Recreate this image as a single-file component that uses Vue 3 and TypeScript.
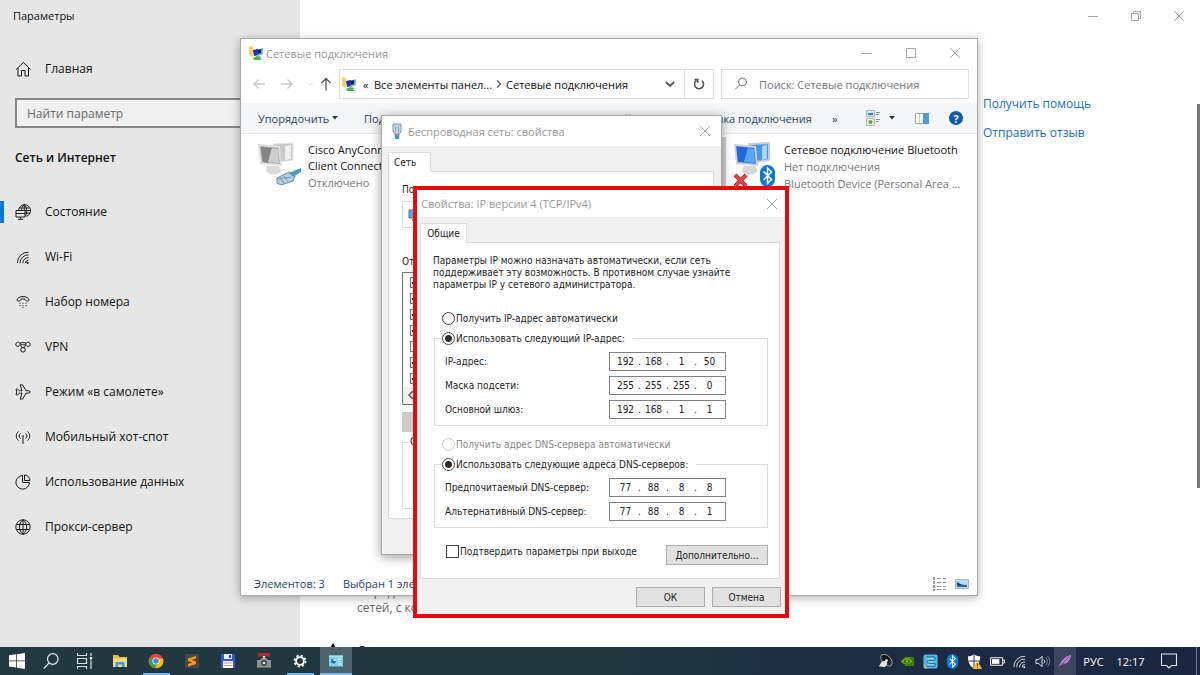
<script setup lang="ts">
import { ref } from 'vue'

interface NavItem {
  label: string
  paths: string[]
  active?: boolean
}

interface AddressRow {
  label: string
  octets: string[]
}

const navItems: NavItem[] = [
  {
    label: 'Состояние',
    active: true,
    paths: [
      'M3.6 6.5A6 6 0 1 1 11.5 12.4M9.300 .7C6.900 2.700 6.600 4.500 6.600 6.500M9.300 .7c2.800 2.500 3.200 7.500 1.200 11.500M4.200 4h10.300M10 9h5M9.300 .7v5.800M3.300 6.500h12',
      'M1 6.5h9v6.500H1zM3 15.300h5M5.500 13v2.300M1 9.500h9',
    ],
  },
  {
    label: 'Wi-Fi',
    paths: [
      'M2.5 14A10.5 10.5 0 0 1 13.5 3.2M5 14.2a8.2 8.2 0 0 1 8.5-8.3M7.8 14.2a5.6 5.6 0 0 1 5.7-5.6M10.3 14.2a3.2 3.2 0 0 1 3.2-3',
      'M12 13.2h1.2v1.2H12z',
    ],
  },
  {
    label: 'Набор номера',
    paths: [
      'M2 6.3C2 1.3 14 1.3 14 6.3c0 1-3.2 1-3.2 0 0-1.9-5.6-1.9-5.6 0C5.2 7.3 2 7.3 2 6.3z',
      'M4.5 9.3h1M7.5 9.3h1M10.5 9.3h1M4.5 11.5h1M7.5 11.5h1M10.5 11.5h1M7.5 13.5h1',
    ],
  },
  {
    label: 'VPN',
    paths: [
      'M5 5.500a2.100 2.100 0 1 1-.5-1.500c2 2.500 5.500 2.500 7 0a2.100 2.100 0 1 1-.5 1.500L8.800 9M5 5.500L7.200 9M4.800 4C6.500 3.500 9.500 3.500 11.200 4M8 8.500a2.300 2.300 0 1 1 0 4.600 2.300 2.300 0 0 1 0-4.600z',
    ],
  },
  {
    label: 'Режим «в самолете»',
    paths: [
      'M1 5.2h1.800L4.5 6.800H7L5.200 .8h2.300l3.700 6h2.600c1.800 0 1.800 2.300 0 2.300h-2.600l-3.700 6H5.200L7 9.100H4.500L2.800 10.800H1l.8-2.800z',
    ],
  },
  {
    label: 'Мобильный хот-спот',
    paths: [
      'M8 7v8M5.5 9.5a3 3 0 0 1 0-5M10.5 9.5a3 3 0 0 0 0-5M3.5 11.5C.5 9 .5 5 3.5 2.500M12.5 11.5c3-2.500 3-6.500 0-9M7.300 6.800h1.400',
    ],
  },
  {
    label: 'Использование данных',
    paths: ['M7.5 1.5A6.800 6.800 0 1 0 14.5 8.5H7.5zM9.5 1a6 6 0 0 1 5.500 5.500H9.500z'],
  },
  {
    label: 'Прокси-сервер',
    paths: [
      'M8 .8a7.200 7.200 0 1 0 0 14.400A7.200 7.200 0 1 0 8 .8zM8 .8v14.400M8 .8c-4.800 4-4.800 10.400 0 14.400M8 .8c4.800 4 4.800 10.400 0 14.400M1.5 5.500h13M1.5 10.500h13',
    ],
  },
]

const ipRows: AddressRow[] = [
  { label: 'IP-адрес:', octets: ['192', '168', '1', '50'] },
  { label: 'Маска подсети:', octets: ['255', '255', '255', '0'] },
  { label: 'Основной шлюз:', octets: ['192', '168', '1', '1'] },
]

const dnsRows: AddressRow[] = [
  { label: 'Предпочитаемый DNS-сервер:', octets: ['77', '88', '8', '8'] },
  { label: 'Альтернативный DNS-сервер:', octets: ['77', '88', '8', '1'] },
]

const components = [true, true, true, true, false, true, true]

const ipMode = ref('manual')
const dnsMode = ref('manual')
const validate = ref(false)
</script>

<template>
  <div class="desktop">
    <div class="settings">
      <aside class="sidebar">
        <div class="app-title">Параметры</div>
        <a class="home" href="#">
          <svg class="nav-icon" viewBox="0 0 16 16"><path d="M1 8.500L8.500 1.500l7 7M3 7v8h3.500V9.500h3.500V15h3.500V7" /></svg>
          Главная
        </a>
        <input class="find" type="text" placeholder="Найти параметр" aria-label="Найти параметр" />
        <h2>Сеть и Интернет</h2>
        <nav>
          <a v-for="item in navItems" :key="item.label" href="#" class="nav-link" :class="{ active: item.active }">
            <svg class="nav-icon" viewBox="0 0 16 16"><path v-for="d in item.paths" :key="d" :d="d" /></svg>
            {{ item.label }}
          </a>
        </nav>
      </aside>

      <main class="main">
        <div class="main-controls">
          <button aria-label="Свернуть"><svg viewBox="0 0 10 10"><path d="M0 5.500h10" /></svg></button>
          <button aria-label="Восстановить"><svg viewBox="0 0 10 10"><path d="M.5 2.500h7v7h-7zM2.500 2.500v-2h7v7h-2" /></svg></button>
          <button aria-label="Закрыть"><svg viewBox="0 0 10 10"><path d="M0 0l10 10M10 0L0 10" /></svg></button>
        </div>
        <div class="main-body">
          <section class="details">
            <p>Определите, какие данные<br />сетей, с которыми</p>
            <h3>
              <svg viewBox="0 0 14 14"><path d="M7 0l7 13H0z" /></svg>
              Средство
            </h3>
          </section>
          <div class="help-links">
            <a href="#">Получить помощь</a>
            <a href="#">Отправить отзыв</a>
          </div>
          <div class="scroll-thumb"></div>
        </div>
      </main>
    </div>

    <section class="window explorer">
      <header class="titlebar">
        <svg class="net-icon" viewBox="0 0 16 16">
          <path d="M1 1l4 1v10l-4-2z" fill="#f3d464" />
          <path d="M5 5l5-1 1 6-5 1z" fill="#1535a8" />
          <path d="M9 5l6-2v6l-5 2z" fill="#7ea9e0" />
          <path d="M9 5l4-1v4l-3 1z" fill="#071a72" />
          <path d="M5 13l4-2 5 1-2 1 2 2H6z" fill="#48b649" />
        </svg>
        <span class="window-name">Сетевые подключения</span>
        <button aria-label="Свернуть"><svg viewBox="0 0 10 10"><path d="M0 5.500h10" /></svg></button>
        <button aria-label="Развернуть"><svg viewBox="0 0 10 10"><path d="M.5 .5h9v9h-9z" /></svg></button>
        <button aria-label="Закрыть"><svg viewBox="0 0 10 10"><path d="M0 0l10 10M10 0L0 10" /></svg></button>
      </header>

      <div class="address-row">
        <div class="history">
          <button aria-label="Назад"><svg viewBox="0 0 14 14"><path d="M13 7H2M6.500 2.500L2 7l4.500 4.500" /></svg></button>
          <button aria-label="Вперед"><svg viewBox="0 0 14 14"><path d="M1 7h11M7.500 2.500L12 7l-4.500 4.500" /></svg></button>
          <button class="tiny" aria-label="Последние"><svg viewBox="0 0 14 14"><path d="M2 4.500L7 9.500l5-5" /></svg></button>
          <button class="up" aria-label="Вверх"><svg viewBox="0 0 14 14"><path d="M7 13.500V1.500M2.500 6L7 1.500 11.500 6" /></svg></button>
        </div>
        <div class="address">
          <svg class="net-icon" viewBox="0 0 16 16">
            <path d="M1 1l4 1v10l-4-2z" fill="#f3d464" />
            <path d="M5 5l5-1 1 6-5 1z" fill="#1535a8" />
            <path d="M9 5l6-2v6l-5 2z" fill="#7ea9e0" />
            <path d="M9 5l4-1v4l-3 1z" fill="#071a72" />
            <path d="M5 13l4-2 5 1-2 1 2 2H6z" fill="#48b649" />
          </svg>
          <span class="laquo">«</span>
          <span class="crumb first">Все элементы панел...</span>
          <svg class="crumb-sep" viewBox="0 0 6 10"><path d="M1 1.500L4.500 5 1 8.500" /></svg>
          <span class="crumb">Сетевые подключения</span>
          <svg class="drop" viewBox="0 0 10 10"><path d="M1 3l4 4 4-4" /></svg>
          <button class="refresh" aria-label="Обновить">
            <svg viewBox="0 0 12 12"><path d="M3.500 2.500A4.500 4.500 0 1 0 9 2.800M1.500 1.500h3.300v3.300" /></svg>
          </button>
        </div>
        <label class="search-box">
          <svg viewBox="0 0 14 14"><circle cx="8.500" cy="5" r="4" /><path d="M5.500 8L1 12.500" /></svg>
          <input type="text" placeholder="Поиск: Сетевые подключения" aria-label="Поиск" />
        </label>
      </div>

      <div class="toolbar">
        <button class="organize">Упорядочить <svg class="caret" viewBox="0 0 6 4"><path d="M0 0h6L3 3.500z" /></svg></button>
        <button class="connect">Подключение к</button>
        <button class="disable">Отключение сетевого устройства</button>
        <button class="diagnose">Диагностика подключения</button>
        <button class="more">»</button>
        <button class="views" aria-label="Вид">
          <svg viewBox="0 0 26 16">
            <path d="M.5 .5h8v6h-8z" fill="#dceaf5" stroke="#a8b4bd" /><path d="M2 3h5v2H2z" fill="#397db5" />
            <path d="M.5 8.500h8v7h-8z" fill="#e9efda" stroke="#a8b4bd" /><circle cx="4.500" cy="12" r="2" fill="#72a34b" />
            <path d="M10 2.500h4M10 4.500h3M10 9.500h4M10 11.500h3" stroke="#8b9096" fill="none" />
          </svg>
          <svg class="caret" viewBox="0 0 6 4"><path d="M0 0h6L3 3.500z" /></svg>
        </button>
        <button class="pane" aria-label="Область просмотра">
          <svg viewBox="0 0 14 11"><path d="M.5 .5h13v10H.5z" fill="#fff" stroke="#9aa5ae" /><path d="M4.500 1v9" stroke="#c3c9ce" /><path d="M8 0h6v11H8z" fill="#4b9cd8" /></svg>
        </button>
        <button class="help" aria-label="Справка">?</button>
      </div>

      <div class="connections">
        <article class="connection">
          <svg class="device" viewBox="0 0 44 46">
            <path d="M15 2l20-1v17l-18 3z" fill="#c9c9c9" stroke="#e8e8e8" />
            <path d="M27 4l6-1v14l-6 1z" fill="#efefef" />
            <path d="M9 24l12 0 3 5c-4 5-14 4-16 0z" fill="#dadada" />
            <path d="M1 3l20 2 2 18-20-2z" fill="#a3a3a3" stroke="#dedede" stroke-width="2" />
            <path d="M3 5l11 1-4 15-5-1z" fill="#858585" />
            <path d="M14 6l6 1 1 14-11-1z" fill="#cdcdcd" />
            <path d="M19 36l12-6 6 4-2 5-12 4-4-2z" fill="#b9cddd" stroke="#6c8ba2" />
            <path d="M22 36l4 5M26 34l4 5M19 37l14-2" stroke="#7695ac" fill="none" />
            <path d="M31 31l12-5v4l-8 5z" fill="#4b9aca" />
          </svg>
          <div>
            <div class="conn-name">Cisco AnyConnect Secure Mobility<br />Client Connection</div>
            <div class="conn-state">Отключено</div>
          </div>
        </article>
        <article class="connection selected"></article>
        <article class="connection">
          <svg class="device" viewBox="0 0 44 46">
            <path d="M15 2l20-1v17l-18 3z" fill="#4896e9" stroke="#c9cfd5" stroke-width="2" />
            <path d="M28 4l5-1v14l-5 1z" fill="#a7d4ff" />
            <path d="M9 24l12 0 3 5c-4 5-14 4-16 0z" fill="#d5d8db" />
            <path d="M1 3l20 2 2 18-20-2z" fill="#2468d8" stroke="#cbd1d6" stroke-width="2" />
            <path d="M14 6l6 1 1 14-11-1z" fill="#58a7f3" />
            <rect x="26" y="23" width="15" height="22" rx="7.500" fill="#0a78d7" />
            <path d="M29.500 29.500l8 8-4 4V26l4 4-8 8" fill="none" stroke="#fff" stroke-width="1.500" />
            <path d="M1 33l11 11M12 33L1 44" stroke="#b52222" stroke-width="4" /><path d="M1 33l11 11M12 33L1 44" stroke="#ef4848" stroke-width="2" />
          </svg>
          <div>
            <div class="conn-name">Сетевое подключение Bluetooth</div>
            <div class="conn-state">Нет подключения</div>
            <div class="conn-state">Bluetooth Device (Personal Area ...</div>
          </div>
        </article>
      </div>

      <footer class="statusbar">
        <span class="count">Элементов: 3</span>
        <span class="chosen">Выбран 1 элемент</span>
        <button aria-label="Таблица">
          <svg viewBox="0 0 14 14"><path d="M1 0v14" stroke="#999" stroke-width="2" stroke-dasharray="3 1" /><path d="M4 1.500h4M10 1.500h3M4 5.500h4M10 5.500h3M4 9.500h4M10 9.500h3M4 12.500h4M10 12.500h3" stroke="#999" /></svg>
        </button>
        <button aria-label="Значки">
          <svg viewBox="0 0 14 12"><path d="M.5 1.500h13v9H.5z" fill="#b9dcf3" stroke="#9bb6cc" /><path d="M2 6l10 1v2H2z" fill="#256b91" /><path d="M2 4l5 3H2z" fill="#16414d" /></svg>
        </button>
      </footer>
    </section>

    <section class="window adapter" role="dialog" aria-label="Беспроводная сеть: свойства">
      <header class="titlebar">
        <svg class="plug-icon" viewBox="0 0 10 16"><path d="M1 1h8v8l-2 2H3L1 9z" fill="#c3d5e4" stroke="#8199ad" /><path d="M3.500 3v6M6.500 3v6" stroke="#8fa6bb" /><path d="M2.500 11h5v2h-5z" fill="#7797b0" /><path d="M3 13h4v3H3z" fill="#2b9ad0" /></svg>
        <span class="window-name">Беспроводная сеть: свойства</span>
        <button aria-label="Закрыть"><svg viewBox="0 0 10 10"><path d="M0 0l10 10M10 0L0 10" /></svg></button>
      </header>
      <div class="tabs"><button class="tab">Сеть</button></div>
      <div class="page">
        <div>Подключение через:</div>
        <div class="adapter-name">
          <svg viewBox="0 0 14 12"><path d="M1 1h12v8H1z" fill="#59a9df" stroke="#4a7594" /><path d="M4 10h6v2H4z" fill="#8ba0ae" /></svg>
        </div>
        <div>Отмеченные компоненты</div>
        <div class="component-list">
          <input v-for="(on, i) in components" :key="i" type="checkbox" class="check small" :checked="on" :aria-label="'Компонент ' + (i + 1)" />
          <div class="list-scroll"><svg viewBox="0 0 6 8"><path d="M5 0L1 4l4 4" /></svg></div>
        </div>
        <div class="install"></div>
        <fieldset class="about"><legend>Описание</legend></fieldset>
      </div>
    </section>

    <section class="window ipv4" role="dialog" aria-label="Свойства: IP версии 4 (TCP/IPv4)">
      <header class="titlebar">
        <span class="window-name">Свойства: IP версии 4 (TCP/IPv4)</span>
        <button aria-label="Закрыть"><svg viewBox="0 0 10 10"><path d="M0 0l10 10M10 0L0 10" /></svg></button>
      </header>
      <div class="tabs"><button class="tab">Общие</button></div>
      <div class="page">
        <p class="intro">
          Параметры IP можно назначать автоматически, если сеть<br />
          поддерживает эту возможность. В противном случае узнайте<br />
          параметры IP у сетевого администратора.
        </p>
        <label class="option ip-auto"><input v-model="ipMode" class="radio" type="radio" name="ip" value="auto" />Получить IP-адрес автоматически</label>
        <fieldset class="group">
          <legend><label class="option"><input v-model="ipMode" class="radio" type="radio" name="ip" value="manual" />Использовать следующий IP-адрес:</label></legend>
          <div v-for="row in ipRows" :key="row.label" class="address-line">
            <span>{{ row.label }}</span>
            <div class="ip-field" role="group" :aria-label="row.label">
              <template v-for="(_, i) in row.octets" :key="i">
                <span v-if="i > 0" class="dot">.</span>
                <input v-model="row.octets[i]" type="text" :aria-label="row.label + ' ' + (i + 1)" />
              </template>
            </div>
          </div>
        </fieldset>
        <label class="option dns-auto"><input v-model="dnsMode" class="radio" type="radio" name="dns" value="auto" disabled />Получить адрес DNS-сервера автоматически</label>
        <fieldset class="group">
          <legend><label class="option"><input v-model="dnsMode" class="radio" type="radio" name="dns" value="manual" />Использовать следующие адреса DNS-серверов:</label></legend>
          <div v-for="row in dnsRows" :key="row.label" class="address-line">
            <span>{{ row.label }}</span>
            <div class="ip-field" role="group" :aria-label="row.label">
              <template v-for="(_, i) in row.octets" :key="i">
                <span v-if="i > 0" class="dot">.</span>
                <input v-model="row.octets[i]" type="text" :aria-label="row.label + ' ' + (i + 1)" />
              </template>
            </div>
          </div>
        </fieldset>
        <div class="confirm-row">
          <label class="option"><input v-model="validate" class="check" type="checkbox" />Подтвердить параметры при выходе</label>
          <button class="push wide">Дополнительно...</button>
        </div>
      </div>
      <footer class="actions">
        <button class="push">ОК</button>
        <button class="push">Отмена</button>
      </footer>
    </section>

    <footer class="taskbar">
      <div class="system-buttons">
        <button aria-label="Пуск"><svg viewBox="0 0 16 16"><path d="M0 2.300L7 1.300v6.200H0zM7.800 1.200L16 0v7.500H7.800zM0 8.300h7v6.300l-7-1zM7.800 8.300H16V16l-8.200-1.200z" fill="#fff" /></svg></button>
        <button aria-label="Поиск"><svg viewBox="0 0 16 16"><circle cx="9.800" cy="6" r="5.300" fill="none" stroke="#e4e9eb" stroke-width="1.200" /><path d="M6 10L.8 15.500" stroke="#e4e9eb" stroke-width="1.200" /></svg></button>
        <button aria-label="Представление задач"><svg viewBox="0 0 16 16"><path d="M.5 0v2.500h9V0M.5 5.500h9v5h-9zM.5 16v-2.500h9V16M14 0v3M14 7.500V16" fill="none" stroke="#d9dfe2" stroke-width="1.200" /><path d="M12.800 4h2.400v2.500h-2.400z" fill="#fff" /></svg></button>
      </div>
      <div class="pinned">
        <button aria-label="Проводник"><svg viewBox="0 0 16 16"><path d="M1 2h5l1.500 2H15v10H1z" fill="#e8b84a" /><path d="M1 5.500h14V14H1z" fill="#ffdc7b" /><path d="M3.500 14V9h9v5h-2.500v-2.500H6V14z" fill="#3a9be0" /></svg></button>
        <button class="running" aria-label="Chrome"><svg viewBox="0 0 16 16"><circle cx="8" cy="8" r="7.300" fill="#ea4335" /><path d="M1.700 4.300A7.300 7.300 0 0 0 7 15.200L10.500 10 5 9z" fill="#34a853" /><path d="M15 5.500A7.300 7.300 0 0 1 7 15.200l4-6.200V5.500z" fill="#fbbc05" /><circle cx="8" cy="8" r="3.600" fill="#f5f5f5" /><circle cx="8" cy="8" r="2.700" fill="#4285f4" /></svg></button>
        <button aria-label="Sublime Text"><svg viewBox="0 0 16 16"><rect x="1" y="1" width="14" height="14" rx="1" fill="#47474a" /><path d="M4 5.500L12 3v2.500L7.500 7 12 8.500v2.500l-8 2.500V11l4.500-1.500L4 8z" fill="#ff9800" /></svg></button>
        <button aria-label="Total Commander"><svg viewBox="0 0 16 16"><path d="M1 1h13l1 1v13H1z" fill="#3458d1" /><path d="M4 1h8v5H4z" fill="#edf0fa" /><path d="M9 2h2v3H9z" fill="#2645ac" /><path d="M3 8h10v7H3z" fill="#fff" /><path d="M4 10h8M4 12.500h8" stroke="#b695c5" /></svg></button>
        <button aria-label="Клапан"><svg viewBox="0 0 16 16"><path d="M2 0h12v3.500H2z" fill="#b92531" /><path d="M7 3h2v3H7z" fill="#e5e5e5" /><path d="M1 7h3l2-2h4l2 2h3v8H1z" fill="#8f9495" /><circle cx="8" cy="10" r="3" fill="#3c4245" /><circle cx="8" cy="10" r="1.300" fill="#e7e9e9" /><path d="M1 14h14v1H1z" fill="#6d7476" /></svg></button>
        <button class="running" aria-label="Параметры"><svg viewBox="0 0 16 16"><circle cx="8" cy="8" r="3.900" fill="none" stroke="#fff" stroke-width="1.900" /><circle cx="8" cy="8" r="5.500" fill="none" stroke="#fff" stroke-width="1.800" stroke-dasharray="2.160 2.160" /></svg></button>
        <button class="running focused" aria-label="Панель управления"><svg viewBox="0 0 16 16"><path d="M1 2.500h14v11H1z" fill="#7fd0f5" /><path d="M1 2.500h14v1.500H1z" fill="#a9e2fb" /><circle cx="5.500" cy="8" r="2.500" fill="#1878b5" /><path d="M5.500 8V5.500A2.500 2.500 0 0 1 8 8z" fill="#fff" /><path d="M10 6h3M10 8.500h3M10 11h3" stroke="#fff" /></svg></button>
      </div>
      <div class="tray">
        <button aria-label="Аудио"><svg viewBox="0 0 16 16"><ellipse cx="9" cy="6.500" rx="7.500" ry="4.500" fill="#15191e" stroke="#c8c8c8" stroke-width=".8" transform="rotate(48 9 6.500)" /><path d="M1 13l3-5 5-1 1 4-3 3z" fill="#e5e5e5" /><circle cx="9" cy="7" r="1.500" fill="#fff" /></svg></button>
        <button aria-label="NVIDIA"><svg viewBox="0 0 16 16"><path d="M5 3h10v10H5z" fill="#3f7810" /><path d="M1 8c3-5 9-5 12 0-3 4-9 4-12 0z" fill="#76b900" /><path d="M3.500 8c2-3 5-3 7.500 0-2 3-5.500 3-7.500 0z" fill="#285a0b" /><circle cx="7.500" cy="8" r="1.300" fill="#83c521" /></svg></button>
        <button aria-label="Графика"><svg viewBox="0 0 16 16"><rect x=".5" y=".5" width="15" height="15" rx="2" fill="#57b5df" /><path d="M4 3h8c2 1 1 4-1 4H6c-2 0-2 3 0 3h7v3H4" fill="none" stroke="#176a9b" /><path d="M5 5h6M5 8.500h7M5 11.500h7" stroke="#b6e1ee" fill="none" /><path d="M.5 11l4 4.500H2z" fill="#e6c256" /></svg></button>
        <button aria-label="Bluetooth"><svg viewBox="0 0 16 16"><rect x="2" y="0" width="12" height="16" rx="6" fill="#0a78e0" /><path d="M5 5l6 6-3 3V2l3 3-6 6" fill="none" stroke="#fff" stroke-width="1.100" /></svg></button>
        <button aria-label="Безопасность"><svg viewBox="0 0 16 16"><path d="M1 2.500C4 2.500 6 1.500 7.500 0 9 1.500 11 2.500 14 2.500 14 9 12 13 7.500 15.500 3 13 1 9 1 2.500z" fill="#fff" /><path d="M7.500 0v15M1.500 7.500h12" stroke="#1d2a3c" /><path d="M11 7l5 9H6.500z" fill="#ffbf2d" /><path d="M11.200 10v3M11.200 14v1" stroke="#302d21" /></svg></button>
        <button aria-label="Батарея"><svg viewBox="0 0 16 16"><path d="M.5 4h13v8H.5zM13.500 6.500h2v3h-2" fill="none" stroke="#fff" /><path d="M2 5.500h8v5H2z" fill="#fff" /></svg></button>
        <button aria-label="Wi-Fi"><svg viewBox="0 0 16 16"><path d="M2 14A11 11 0 0 1 14 2.500M5 14.200A8 8 0 0 1 14 5.500M8 14.200A5.500 5.500 0 0 1 14 8.500M10.800 14.200a3 3 0 0 1 3.200-3" fill="none" stroke="#d9dde3" /><circle cx="13" cy="14" r="1" fill="#fff" /></svg></button>
        <button aria-label="Громкость"><svg viewBox="0 0 16 16"><path d="M1 6h3l3.500-3.500v11L4 10H1zM9.500 6a3 3 0 0 1 0 4" fill="none" stroke="#eef0f3" /><path d="M11.500 4a5.500 5.500 0 0 1 0 8M13.500 2.500a8 8 0 0 1 0 11" fill="none" stroke="#7d8797" /></svg></button>
        <button class="focused" aria-label="Перо"><svg viewBox="0 0 16 16"><path d="M1 15l3-6c2-4 6-7 11-8-1 5-3 9-8 10l-3 1z" fill="#b986d4" /><path d="M1 15L13 3M5 11l7-1" stroke="#553668" stroke-width=".8" /></svg></button>
      </div>
      <button class="language">РУС</button>
      <time class="clock">12:17</time>
      <button class="notify" aria-label="Уведомления"><svg viewBox="0 0 16 16"><path d="M.5 1h15v11.500h-5L8 15l-2.500-2.500h-5z" fill="none" stroke="#e8ebef" stroke-width="1.100" /></svg></button>
      <button class="show-desktop" aria-label="Показать рабочий стол"></button>
    </footer>
  </div>
</template>

<style>
body {
  margin: 0;
}
</style>

<style scoped>
.desktop {
  position: relative;
  display: flex;
  flex-direction: column;
  height: 100vh;
  overflow: hidden;
  background: #fff;
  color: #111;
  font-family: "Open Sans", "Noto Sans", sans-serif;
  font-size: 11px;
}
* {
  box-sizing: border-box;
}
button {
  display: flex;
  align-items: center;
  justify-content: center;
  padding: 0;
  border: 0;
  background: none;
  color: inherit;
  font: inherit;
}
input {
  font: inherit;
  color: inherit;
}
a {
  text-decoration: none;
}
svg {
  flex: none;
}

/* Settings app */
.settings {
  display: flex;
  flex: 1;
  min-height: 0;
}
.sidebar {
  width: 300px;
  flex: none;
  background: #e6e6e6;
  font-size: 12px;
}
.app-title {
  padding-left: 13px;
  height: 46px;
  line-height: 31px;
  font-size: 11px;
}
.home,
.nav-link {
  display: flex;
  align-items: center;
  gap: 14px;
  height: 45px;
  padding-left: 15px;
  color: #111;
}
.nav-icon {
  width: 16px;
  height: 16px;
  fill: none;
  stroke: #1b1b1b;
  stroke-width: 1;
}
.find {
  display: block;
  width: 270px;
  height: 30px;
  margin: 7px 0 0 15px;
  padding: 0 10px;
  border: 2px solid #858585;
  background: #f0f0f0;
}
.find::placeholder {
  color: #686868;
  opacity: 1;
}
h2 {
  margin: 0;
  padding-left: 15px;
  height: 61px;
  line-height: 59px;
  font-size: 12px;
  font-weight: 600;
}
.active {
  background: linear-gradient(#0078d7, #0078d7) 0 50% / 4px 22px no-repeat;
}
.main {
  display: flex;
  flex: 1;
  flex-direction: column;
  min-width: 0;
}
.main-controls {
  display: flex;
  justify-content: flex-end;
  height: 31px;
}
.main-controls button {
  width: 43px;
}
.main-controls svg,
.titlebar button svg {
  width: 10px;
  height: 10px;
  fill: none;
  stroke: #999;
  stroke-width: 0.9;
}
.main-body {
  display: flex;
  flex: 1;
  min-height: 0;
}
.details {
  display: flex;
  flex: 1;
  flex-direction: column;
  padding: 553px 0 0 57px;
  color: #666;
  font-size: 12px;
}
.details p {
  margin: 0;
  line-height: 16px;
}
.details h3 {
  display: flex;
  align-items: center;
  gap: 17px;
  margin: 24px 0 0 -31px;
  color: #111;
  font-size: 13px;
  font-weight: 400;
  line-height: 20px;
}
.details h3 svg {
  width: 14px;
  height: 14px;
}
.help-links {
  display: flex;
  flex-direction: column;
  gap: 9px;
  width: 214px;
  padding-top: 63px;
  font-size: 12px;
  line-height: 20px;
}
.help-links a {
  color: #1a6fb5;
}
.scroll-thumb {
  width: 3px;
  height: 384px;
  margin-top: 73px;
  background: #777;
}

/* Shared window chrome */
.window {
  position: absolute;
  display: flex;
  flex-direction: column;
}
.titlebar {
  display: flex;
  align-items: center;
  height: 30px;
  flex: none;
  background: #fff;
  color: #999;
}
.window-name {
  flex: 1;
}

/* Network connections window */
.explorer {
  left: 240px;
  top: 38px;
  width: 738px;
  height: 558px;
  border: 1px solid #aaa;
  background: #fff;
  box-shadow: 0 2px 9px rgba(0, 0, 0, 0.3);
}
.explorer .titlebar {
  height: 28px;
  margin-bottom: 2px;
  padding-left: 7px;
}
.explorer .titlebar button {
  width: 44px;
  height: 28px;
}
.net-icon {
  width: 16px;
  height: 16px;
  margin-right: 2px;
}
.address-row {
  display: flex;
  height: 30px;
  padding-right: 8px;
}
.history {
  display: flex;
  align-items: center;
  width: 98px;
  padding-left: 11px;
}
.history svg {
  width: 14px;
  height: 14px;
  fill: none;
  stroke: #c9c9c9;
  stroke-width: 1.3;
}
.history button {
  width: 14px;
  margin-right: 14px;
}
.history .tiny {
  width: 8px;
  margin: 0 5px 0 -2px;
}
.history .tiny svg {
  width: 8px;
}
.history .up {
  margin: 0;
}
.history .up svg {
  stroke: #555;
}
.address {
  display: flex;
  flex: 1;
  align-items: center;
  padding-left: 1px;
  border: 1px solid #ddd;
}
.laquo {
  width: 15px;
  padding-left: 4px;
}
.crumb.first {
  margin-right: 4px;
}
.crumb-sep {
  width: 6px;
  height: 10px;
  margin-right: 4px;
  fill: none;
  stroke: #555;
  stroke-width: 1.3;
}
.drop {
  width: 10px;
  height: 10px;
  margin: 0 9px 0 auto;
  fill: none;
  stroke: #555;
  stroke-width: 1.8;
}
.refresh {
  width: 29px;
  height: 28px;
  border-left: 1px solid #ddd;
}
.refresh svg {
  width: 12px;
  height: 12px;
  fill: none;
  stroke: #555;
  stroke-width: 1.6;
}
.search-box {
  display: flex;
  align-items: center;
  width: 248px;
  margin-left: 7px;
  padding-left: 12px;
  border: 1px solid #ddd;
}
.search-box svg {
  width: 14px;
  height: 14px;
  fill: none;
  stroke: #777;
}
.search-box input {
  flex: 1;
  min-width: 0;
  padding: 0 0 0 11px;
  border: 0;
  background: none;
}
.search-box input::placeholder {
  color: #757575;
  opacity: 1;
}
.toolbar {
  display: flex;
  align-items: center;
  height: 31px;
  margin-top: 4px;
  padding-left: 17px;
  border-bottom: 1px solid #e7e9ec;
  background: #f5f6f8;
  color: #2c4362;
  white-space: nowrap;
}
.toolbar button {
  justify-content: flex-start;
}
.caret {
  width: 6px;
  height: 4px;
  margin-left: 3px;
  fill: #2b3440;
}
.organize {
  width: 106px;
}
.connect {
  width: 110px;
}
.disable {
  width: 193px;
}
.diagnose {
  flex: 1;
}
.more {
  width: 34px;
}
.views {
  width: 49px;
}
.views svg:first-child {
  width: 26px;
  height: 16px;
  margin-right: -6px;
}
.pane {
  width: 34px;
}
.pane svg {
  width: 14px;
  height: 11px;
}
.toolbar .help {
  justify-content: center;
  width: 14px;
  height: 14px;
  margin-right: 14px;
  border-radius: 50%;
  background: #0b5aad;
  color: #fff;
  font-weight: 700;
}
.connections {
  display: grid;
  grid-template-columns: repeat(3, 238px);
  flex: 1;
  align-content: start;
  padding: 3px 0 0 9px;
  overflow: hidden;
}
.connection {
  display: flex;
  align-items: flex-start;
  gap: 6px;
  height: 58px;
  padding: 5px 0 0 8px;
  white-space: nowrap;
  overflow: hidden;
}
.connection.selected {
  background: #d5d5d5;
}
.device {
  width: 44px;
  height: 46px;
}
.conn-name {
  line-height: 16px;
}
.conn-state {
  color: #777;
  line-height: 17px;
}
.statusbar {
  display: flex;
  align-items: center;
  height: 23px;
  padding: 0 8px 0 13px;
  color: #2c4362;
}
.count {
  width: 89px;
}
.chosen {
  flex: 1;
}
.statusbar button {
  width: 14px;
  margin-left: 8px;
}
.statusbar svg {
  width: 14px;
  height: 14px;
}

/* Dialogs */
.tabs {
  display: flex;
  flex: none;
}
.tab {
  position: relative;
  z-index: 1;
  height: 20px;
  margin-bottom: -1px;
  border: 1px solid #dcdcdc;
  border-bottom: 0;
  background: #fff;
}
.page {
  border: 1px solid #dcdcdc;
  background: #fff;
}
.adapter,
.ipv4 {
  background: #f0f0f0;
}
.adapter .tabs,
.adapter .page,
.ipv4 .tabs,
.ipv4 .page,
.actions {
  color: #222;
  font-family: "DejaVu Sans Condensed", "DejaVu Sans", sans-serif;
  font-size: 10px;
}
.adapter {
  left: 381px;
  top: 115px;
  width: 341px;
  height: 440px;
  border: 1px solid #aaa;
  box-shadow: 0 2px 10px rgba(0, 0, 0, 0.4);
}
.adapter .titlebar {
  padding: 0 11px 0 10px;
}
.plug-icon {
  width: 10px;
  height: 16px;
  margin-right: 6px;
}
.adapter .tabs {
  padding: 6px 0 0 6px;
}
.adapter .tab {
  width: 43px;
  justify-content: flex-start;
  padding-left: 5px;
}
.adapter .page {
  height: 348px;
  margin: 0 7px 0 6px;
  padding: 11px 12px 0 13px;
  line-height: 14px;
}
.adapter-name {
  display: flex;
  align-items: center;
  height: 27px;
  margin: 4px 0 27px;
  padding-left: 5px;
  border: 1px solid #ddd;
}
.adapter-name svg {
  width: 14px;
  height: 12px;
}
.component-list {
  display: flex;
  flex-direction: column;
  gap: 5px;
  height: 133px;
  margin-top: 3px;
  padding: 4px 0 0 7px;
  border: 1px solid #777;
}
.list-scroll {
  height: 17px;
  margin: -2px 0 0 -7px;
  padding: 4px 0 0 5px;
  background: #f0f0f0;
}
.list-scroll svg {
  display: block;
  width: 6px;
  height: 8px;
  fill: none;
  stroke: #555;
  stroke-width: 1.5;
}
.install {
  height: 20px;
  width: 90px;
  margin-top: 7px;
  background: #ccc;
}
.about {
  height: 74px;
  margin: 3px 0 0;
  padding: 0 6px;
  border: 1px solid #ddd;
}
.about legend {
  padding: 0 1px;
}

.ipv4 {
  left: 413px;
  top: 186px;
  width: 376px;
  height: 432px;
  border: 4px solid #e30b0b;
}
.ipv4 .titlebar {
  height: 27px;
  padding: 0 8px 0 4px;
}
.ipv4 .tabs {
  padding: 6px 0 0 3px;
}
.ipv4 .tab {
  width: 47px;
}
.ipv4 .page {
  margin: 0 5px 0 3px;
  padding: 12px 11px 13px 12px;
}
.intro {
  margin: 0 0 19px;
  line-height: 12px;
  white-space: nowrap;
}
.option {
  display: flex;
  align-items: center;
  gap: 1px;
  height: 16px;
  white-space: nowrap;
}
.ip-auto,
.dns-auto {
  margin-left: 9px;
}
.dns-auto {
  margin-top: 10px;
  color: #858585;
}
.radio,
.check {
  flex: none;
  width: 13px;
  height: 13px;
  margin: 0;
  appearance: none;
  border: 1px solid #444;
  background: #fff;
}
.radio {
  border-radius: 50%;
}
.radio:checked {
  background: radial-gradient(circle, #2c2c2c 3px, #fff 4px);
}
.radio:disabled {
  border-color: #ccc;
}
.check.small {
  width: 11px;
  height: 11px;
  border-color: #777;
}
.check:checked {
  background:
    linear-gradient(45deg, transparent 30%, #222 30%, #222 70%, transparent 70%) 1px 4px / 4px 4px no-repeat,
    linear-gradient(135deg, transparent 35%, #222 35%, #222 65%, transparent 65%) 3px 2px / 6px 6px no-repeat,
    #fff;
}
.group {
  display: flex;
  flex-direction: column;
  gap: 4px;
  margin: 4px 0 0 1px;
  padding: 5px 41px 6px 10px;
  border: 1px solid #dcdcdc;
}
.group legend {
  margin-left: -3px;
  padding: 0 8px 0 0;
}
.address-line {
  display: grid;
  grid-template-columns: 1fr 117px;
  align-items: center;
  height: 20px;
}
.ip-field {
  display: flex;
  align-items: center;
  justify-content: center;
  height: 19px;
  border: 1px solid #808080;
}
.ip-field input {
  width: 24px;
  padding: 0;
  border: 0;
  background: none;
  text-align: center;
}
.dot {
  width: 4px;
  text-align: center;
}
.confirm-row {
  display: flex;
  align-items: flex-start;
  justify-content: space-between;
  margin-top: 17px;
  padding-left: 13px;
}
.confirm-row .option {
  height: 12px;
}
.push {
  width: 69px;
  height: 20px;
  border: 1px solid #adadad;
  background: #e1e1e1;
}
.push.wide {
  width: 102px;
}
.actions {
  display: flex;
  justify-content: flex-end;
  gap: 7px;
  padding: 8px 4px 0 0;
}

/* Taskbar */
.taskbar {
  position: relative;
  display: flex;
  flex: none;
  height: 28px;
  background: linear-gradient(90deg, #223941, #20363f 50%, #1c2a42 80%, #1a2742);
  color: #fff;
}
.taskbar svg {
  width: 16px;
  height: 16px;
}
.system-buttons {
  display: flex;
}
.system-buttons button {
  width: 34px;
}
.pinned {
  display: flex;
  flex: 1;
}
.pinned button {
  width: 36px;
  background: linear-gradient(#76b9ed, #76b9ed) 50% 100% / 0 2px no-repeat;
}
.pinned .running {
  background-size: 27px 2px;
}
.pinned .focused {
  width: 32px;
  margin-left: 2px;
  background-color: #4c636d;
  background-size: 32px 2px;
}
.tray {
  display: grid;
  grid-template-columns: repeat(9, 1fr);
  width: 202px;
}
.tray svg {
  width: 15px;
  height: 15px;
}
.tray .focused {
  background: #3b465c;
}
.language {
  width: 35px;
}
.clock {
  display: flex;
  align-items: center;
  justify-content: center;
  width: 39px;
}
.notify {
  width: 37px;
}
.show-desktop {
  width: 4px;
  margin-left: 9px;
  border-left: 1px solid #75808f;
}
</style>
